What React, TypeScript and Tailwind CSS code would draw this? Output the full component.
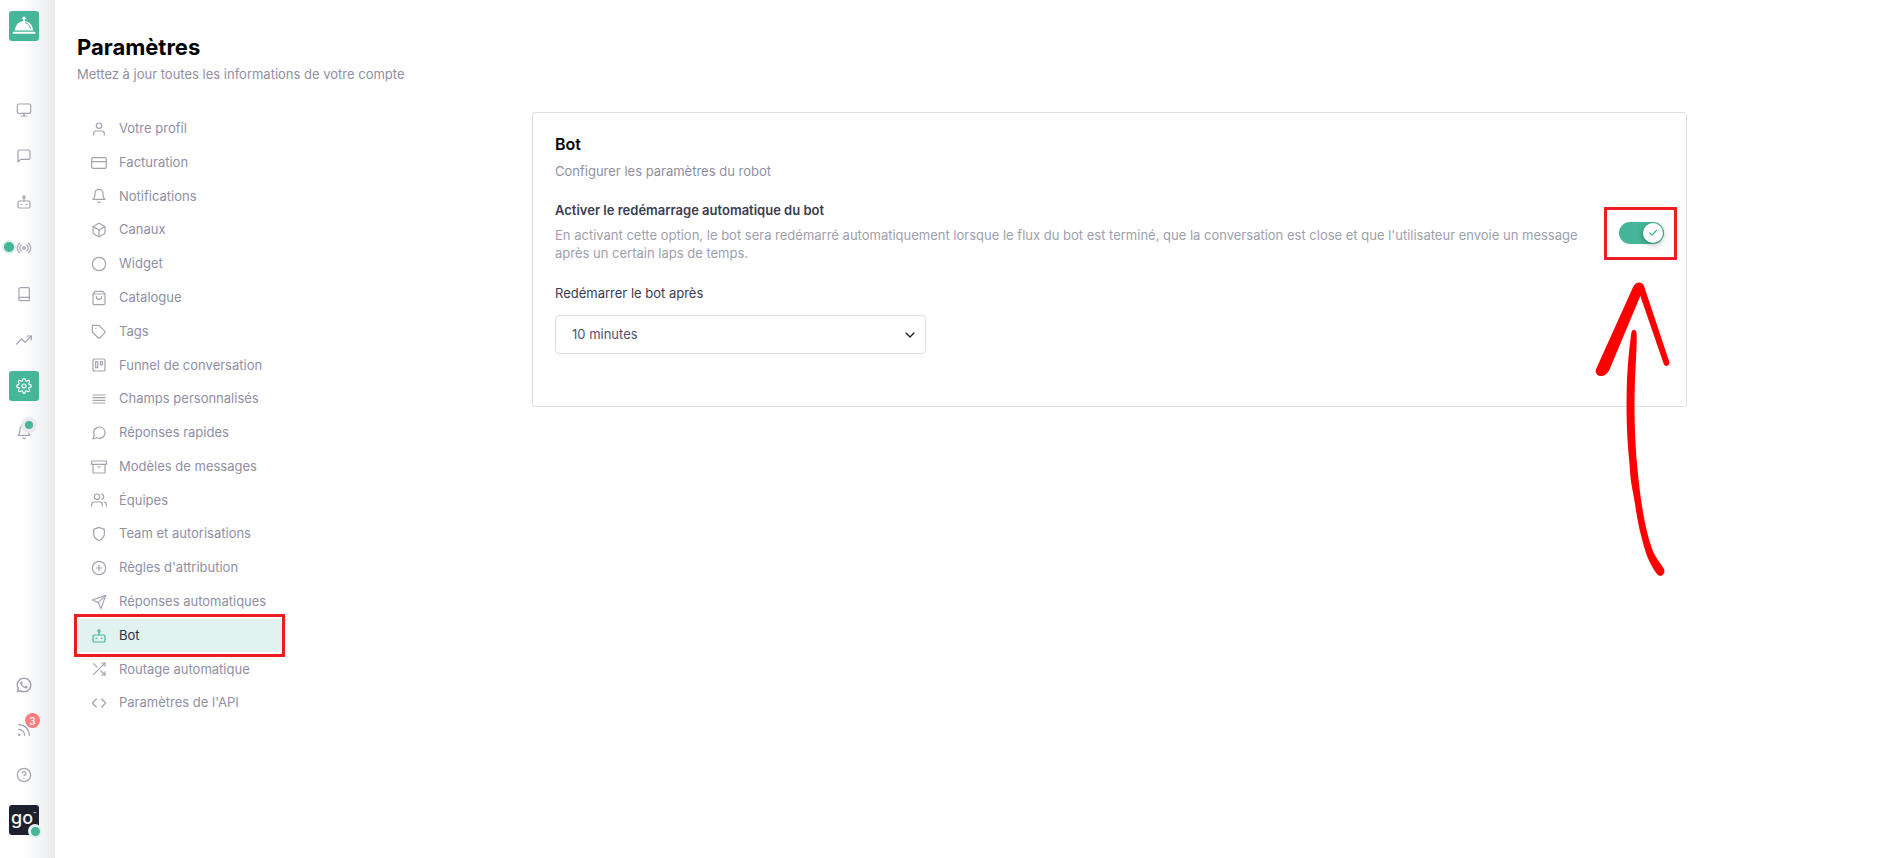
import { useState } from "react";
import type { ComponentType, ReactNode } from "react";
import {
  FiAlignJustify,
  FiArchive,
  FiBell,
  FiBox,
  FiCheck,
  FiChevronDown,
  FiCircle,
  FiCode,
  FiCreditCard,
  FiHelpCircle,
  FiMessageCircle,
  FiMessageSquare,
  FiMonitor,
  FiPlusCircle,
  FiRadio,
  FiRss,
  FiSend,
  FiSettings,
  FiShield,
  FiShoppingBag,
  FiShuffle,
  FiTag,
  FiTrello,
  FiTrendingUp,
  FiUser,
  FiUsers,
} from "react-icons/fi";
import { RiWhatsappLine } from "react-icons/ri";

type Icon = ComponentType<{ className?: string }>;

const BotIcon: Icon = ({ className }) => (
  <svg viewBox="0 0 24 24" fill="none" stroke="currentColor" strokeWidth="2" strokeLinecap="round" strokeLinejoin="round" className={className}>
    <circle cx="12" cy="4.5" r="1.75" />
    <path d="M12 6.5v4" />
    <rect x="3" y="10.5" width="18" height="10.5" rx="2" />
    <path d="M7.5 15.7h1M15.5 15.7h1" />
  </svg>
);

const BookIcon: Icon = ({ className }) => (
  <svg viewBox="0 0 24 24" fill="none" stroke="currentColor" strokeWidth="2" strokeLinecap="round" strokeLinejoin="round" className={className}>
    <path d="M4.5 19.5V4.5a2 2 0 0 1 2-2h12a1.5 1.5 0 0 1 1.5 1.5v18H6.5a2.3 2.3 0 0 1 0-5H20" />
  </svg>
);

const WhatsappIcon: Icon = () => <RiWhatsappLine className="size-[18px]" />;

const ClocheIcon: Icon = ({ className }) => (
  <svg viewBox="0 0 24 20" className={className}>
    <circle cx="12" cy="2.3" r="1.7" fill="white" />
    <path d="M11.2 3h1.600v2.500h-1.600zM3 14.500C3.300 8.800 7 5 12 5s8.700 3.800 9 9.500z" fill="white" />
    <path d="M13.5 6.8c2.600.7 4.400 2.700 5 5.600" fill="none" stroke="#45b698" strokeWidth="1" strokeLinecap="round" />
    <rect x="0.5" y="15.7" width="23" height="2" rx="1" fill="white" />
  </svg>
);

const settings: { label: string; icon: Icon; active?: boolean }[] = [
  { label: "Votre profil", icon: FiUser },
  { label: "Facturation", icon: FiCreditCard },
  { label: "Notifications", icon: FiBell },
  { label: "Canaux", icon: FiBox },
  { label: "Widget", icon: FiCircle },
  { label: "Catalogue", icon: FiShoppingBag },
  { label: "Tags", icon: FiTag },
  { label: "Funnel de conversation", icon: FiTrello },
  { label: "Champs personnalisés", icon: FiAlignJustify },
  { label: "Réponses rapides", icon: FiMessageCircle },
  { label: "Modèles de messages", icon: FiArchive },
  { label: "Équipes", icon: FiUsers },
  { label: "Team et autorisations", icon: FiShield },
  { label: "Règles d'attribution", icon: FiPlusCircle },
  { label: "Réponses automatiques", icon: FiSend },
  { label: "Bot", icon: BotIcon, active: true },
  { label: "Routage automatique", icon: FiShuffle },
  { label: "Paramètres de l'API", icon: FiCode },
];

function RailLink({ label, icon: I, active, children }: { label: string; icon: Icon; active?: boolean; children?: ReactNode }) {
  return (
    <a
      href="#"
      aria-label={label}
      className={
        active
          ? "relative flex size-[30px] items-center justify-center rounded-[3px] bg-[#45b698] text-white"
          : "relative flex size-[30px] items-center justify-center text-[#a3a3b2]"
      }
    >
      <I className="size-4 [stroke-width:1.8]" />
      {children}
    </a>
  );
}

function Rail() {
  return (
    <aside className="flex w-[55px] shrink-0 flex-col items-start bg-linear-to-r from-white from-40% to-[#e9ebee] pt-[11px] pb-[23px] pl-[9px]">
      <a href="#" aria-label="Accueil" className="flex size-[30px] items-center justify-center rounded-[3px] bg-[#45b698]">
        <ClocheIcon className="w-6" />
      </a>
      <nav className="mt-[54px] flex flex-col gap-4">
        <RailLink label="Tableau de bord" icon={FiMonitor} />
        <RailLink label="Conversations" icon={FiMessageSquare} />
        <RailLink label="Robots" icon={BotIcon} />
        <RailLink label="Diffusion" icon={FiRadio}>
          <span className="absolute top-[7px] -left-[7px] size-[14px] rounded-full border-2 border-[#d9efe9] bg-[#45b698]" />
        </RailLink>
        <RailLink label="Carnet" icon={BookIcon} />
        <RailLink label="Rapports" icon={FiTrendingUp} />
        <RailLink label="Paramètres" icon={FiSettings} active />
        <RailLink label="Alertes" icon={FiBell}>
          <span className="absolute top-0 left-3 flex size-4 items-center justify-center rounded-full bg-[#e9e9ee]">
            <span className="size-2 rounded-full bg-[#45b698]" />
          </span>
        </RailLink>
      </nav>
      <nav className="mt-auto flex flex-col gap-[15px]">
        <RailLink label="WhatsApp" icon={WhatsappIcon} />
        <RailLink label="Actualités" icon={FiRss}>
          <span className="absolute -top-0.5 left-4 flex size-[15px] items-center justify-center rounded-full bg-[#fd7c7c] text-[10px] leading-none font-semibold text-white">
            3
          </span>
        </RailLink>
        <RailLink label="Aide" icon={FiHelpCircle} />
        <a href="#" className="relative flex size-[30px] items-center justify-center rounded-[3px] bg-[#1e212d] text-[18px] leading-none font-medium text-[#f4f4ea]">
          <span className="pr-1 pb-1">go</span>
          <span className="absolute top-[7px] right-[3px] text-[5px] leading-none">™</span>
          <span className="absolute -right-[3px] -bottom-[3px] flex size-[14px] items-center justify-center rounded-full bg-[#e1f2ee]">
            <span className="size-[9px] rounded-full bg-[#45b698]" />
          </span>
        </a>
      </nav>
    </aside>
  );
}

function Arrow() {
  return (
    <svg viewBox="0 0 240 900" aria-hidden="true" className="pointer-events-none absolute top-[60px] -left-[26px] w-20" fill="#ff0000">
      <path d="M120 16C127 -3 149 -2 153 12L229 240C231 253 216 256 212 245L142 42L48 266C35 289 7 286 8 264Z" />
      <path d="M115 152C118 139 130 141 131 156C132 200 127 250 125 330C123 420 128 500 132 545C138 615 148 690 160 740C169 780 179 808 189 825L213 861C219 878 202 889 192 876C179 859 165 833 158 810C144 763 134 725 126 665C119 620 113 610 110 550C104 490 99 420 101 335C102 260 109 195 115 152Z" />
    </svg>
  );
}

function BotCard() {
  const [enabled, setEnabled] = useState(true);
  return (
    <section className="h-fit max-w-[1155px] flex-1 rounded-[3px] border border-[#dedfe6] px-[22px] pt-5 pb-[52px]">
      <h2 className="text-base leading-[22px] font-semibold text-black">Bot</h2>
      <p className="mt-[7px] text-[13px] leading-[18px] text-[#8f90a3]">Configurer les paramètres du robot</p>
      <div className="mt-5 flex items-start justify-between">
        <div className="max-w-[1032px]">
          <label htmlFor="restart" className="block text-[13px] leading-5 font-semibold text-[#3c3c50]">
            Activer le redémarrage automatique du bot
          </label>
          <p className="mt-1.5 text-[13px] leading-[18px] text-[#9e9fae]">
            En activant cette option, le bot sera redémarré automatiquement lorsque le flux du bot est terminé, que la
            conversation est close et que l'utilisateur envoie un message après un certain laps de temps.
          </p>
        </div>
        <div className="relative mt-[22px] h-[22px] w-[45px] shrink-0">
          <input
            id="restart"
            type="checkbox"
            role="switch"
            checked={enabled}
            onChange={(e) => setEnabled(e.target.checked)}
            className="peer block h-[22px] w-[45px] cursor-pointer appearance-none rounded-full bg-[#cfd0d8] checked:bg-[#45b698]"
          />
          <span className="pointer-events-none absolute top-px left-px flex size-5 items-center justify-center rounded-full bg-[#fbfbfb] shadow-[0_2px_6px_rgba(0,0,0,0.3)] peer-checked:right-px peer-checked:left-auto">
            <FiCheck className="size-2.5 text-[#45b698] [stroke-width:3]" />
          </span>
          <span aria-hidden="true" className="pointer-events-none absolute -top-[15px] -left-[15px] h-[53px] w-[73px] border-3 border-[#ed1c24]" />
          <Arrow />
        </div>
      </div>
      <label htmlFor="delay" className="mt-[21px] block text-[13px] leading-5 text-[#3c3c50]">
        Redémarrer le bot après
      </label>
      <div className="relative mt-3 w-[371px] max-w-full">
        <select
          id="delay"
          className="block h-[39px] w-full appearance-none rounded-[4px] border border-[#dedfe6] bg-white px-4 text-[13px] text-[#53546a]"
        >
          <option>10 minutes</option>
        </select>
        <FiChevronDown className="pointer-events-none absolute top-3 right-2 size-4 text-[#1e212d]" />
      </div>
    </section>
  );
}

export default function App() {
  return (
    <div className="flex min-h-screen bg-white font-[Inter,sans-serif]">
      <Rail />
      <main className="flex-1 px-[22px] pt-8">
        <h1 className="text-[22px] leading-[30px] font-bold text-black">Paramètres</h1>
        <p className="mt-[3px] text-[13px] leading-[18px] text-[#8f90a3]">Mettez à jour toutes les informations de votre compte</p>
        <div className="mt-[29px] flex">
          <div className="w-[455px] shrink-0">
            <nav className="grid h-[608px] w-[205px] auto-rows-fr">
              {settings.map(({ label, icon: I, active }) => (
                <a
                  key={label}
                  href="#"
                  className={
                    active
                      ? "relative flex items-center gap-3 rounded-[3px] bg-[#e2f2ee] px-[14px] text-[13px] text-[#2f3044]"
                      : "relative flex items-center gap-3 px-[14px] text-[13px] whitespace-nowrap text-[#8f90a3]"
                  }
                >
                  <I className={active ? "size-4 text-[#45b698] [stroke-width:1.8]" : "size-4 text-[#a3a3b2] [stroke-width:1.8]"} />
                  {label}
                  {active && (
                    <span aria-hidden="true" className="pointer-events-none absolute -inset-x-[3px] -inset-y-[5px] border-3 border-[#ed1c24]" />
                  )}
                </a>
              ))}
            </nav>
          </div>
          <BotCard />
        </div>
      </main>
    </div>
  );
}
